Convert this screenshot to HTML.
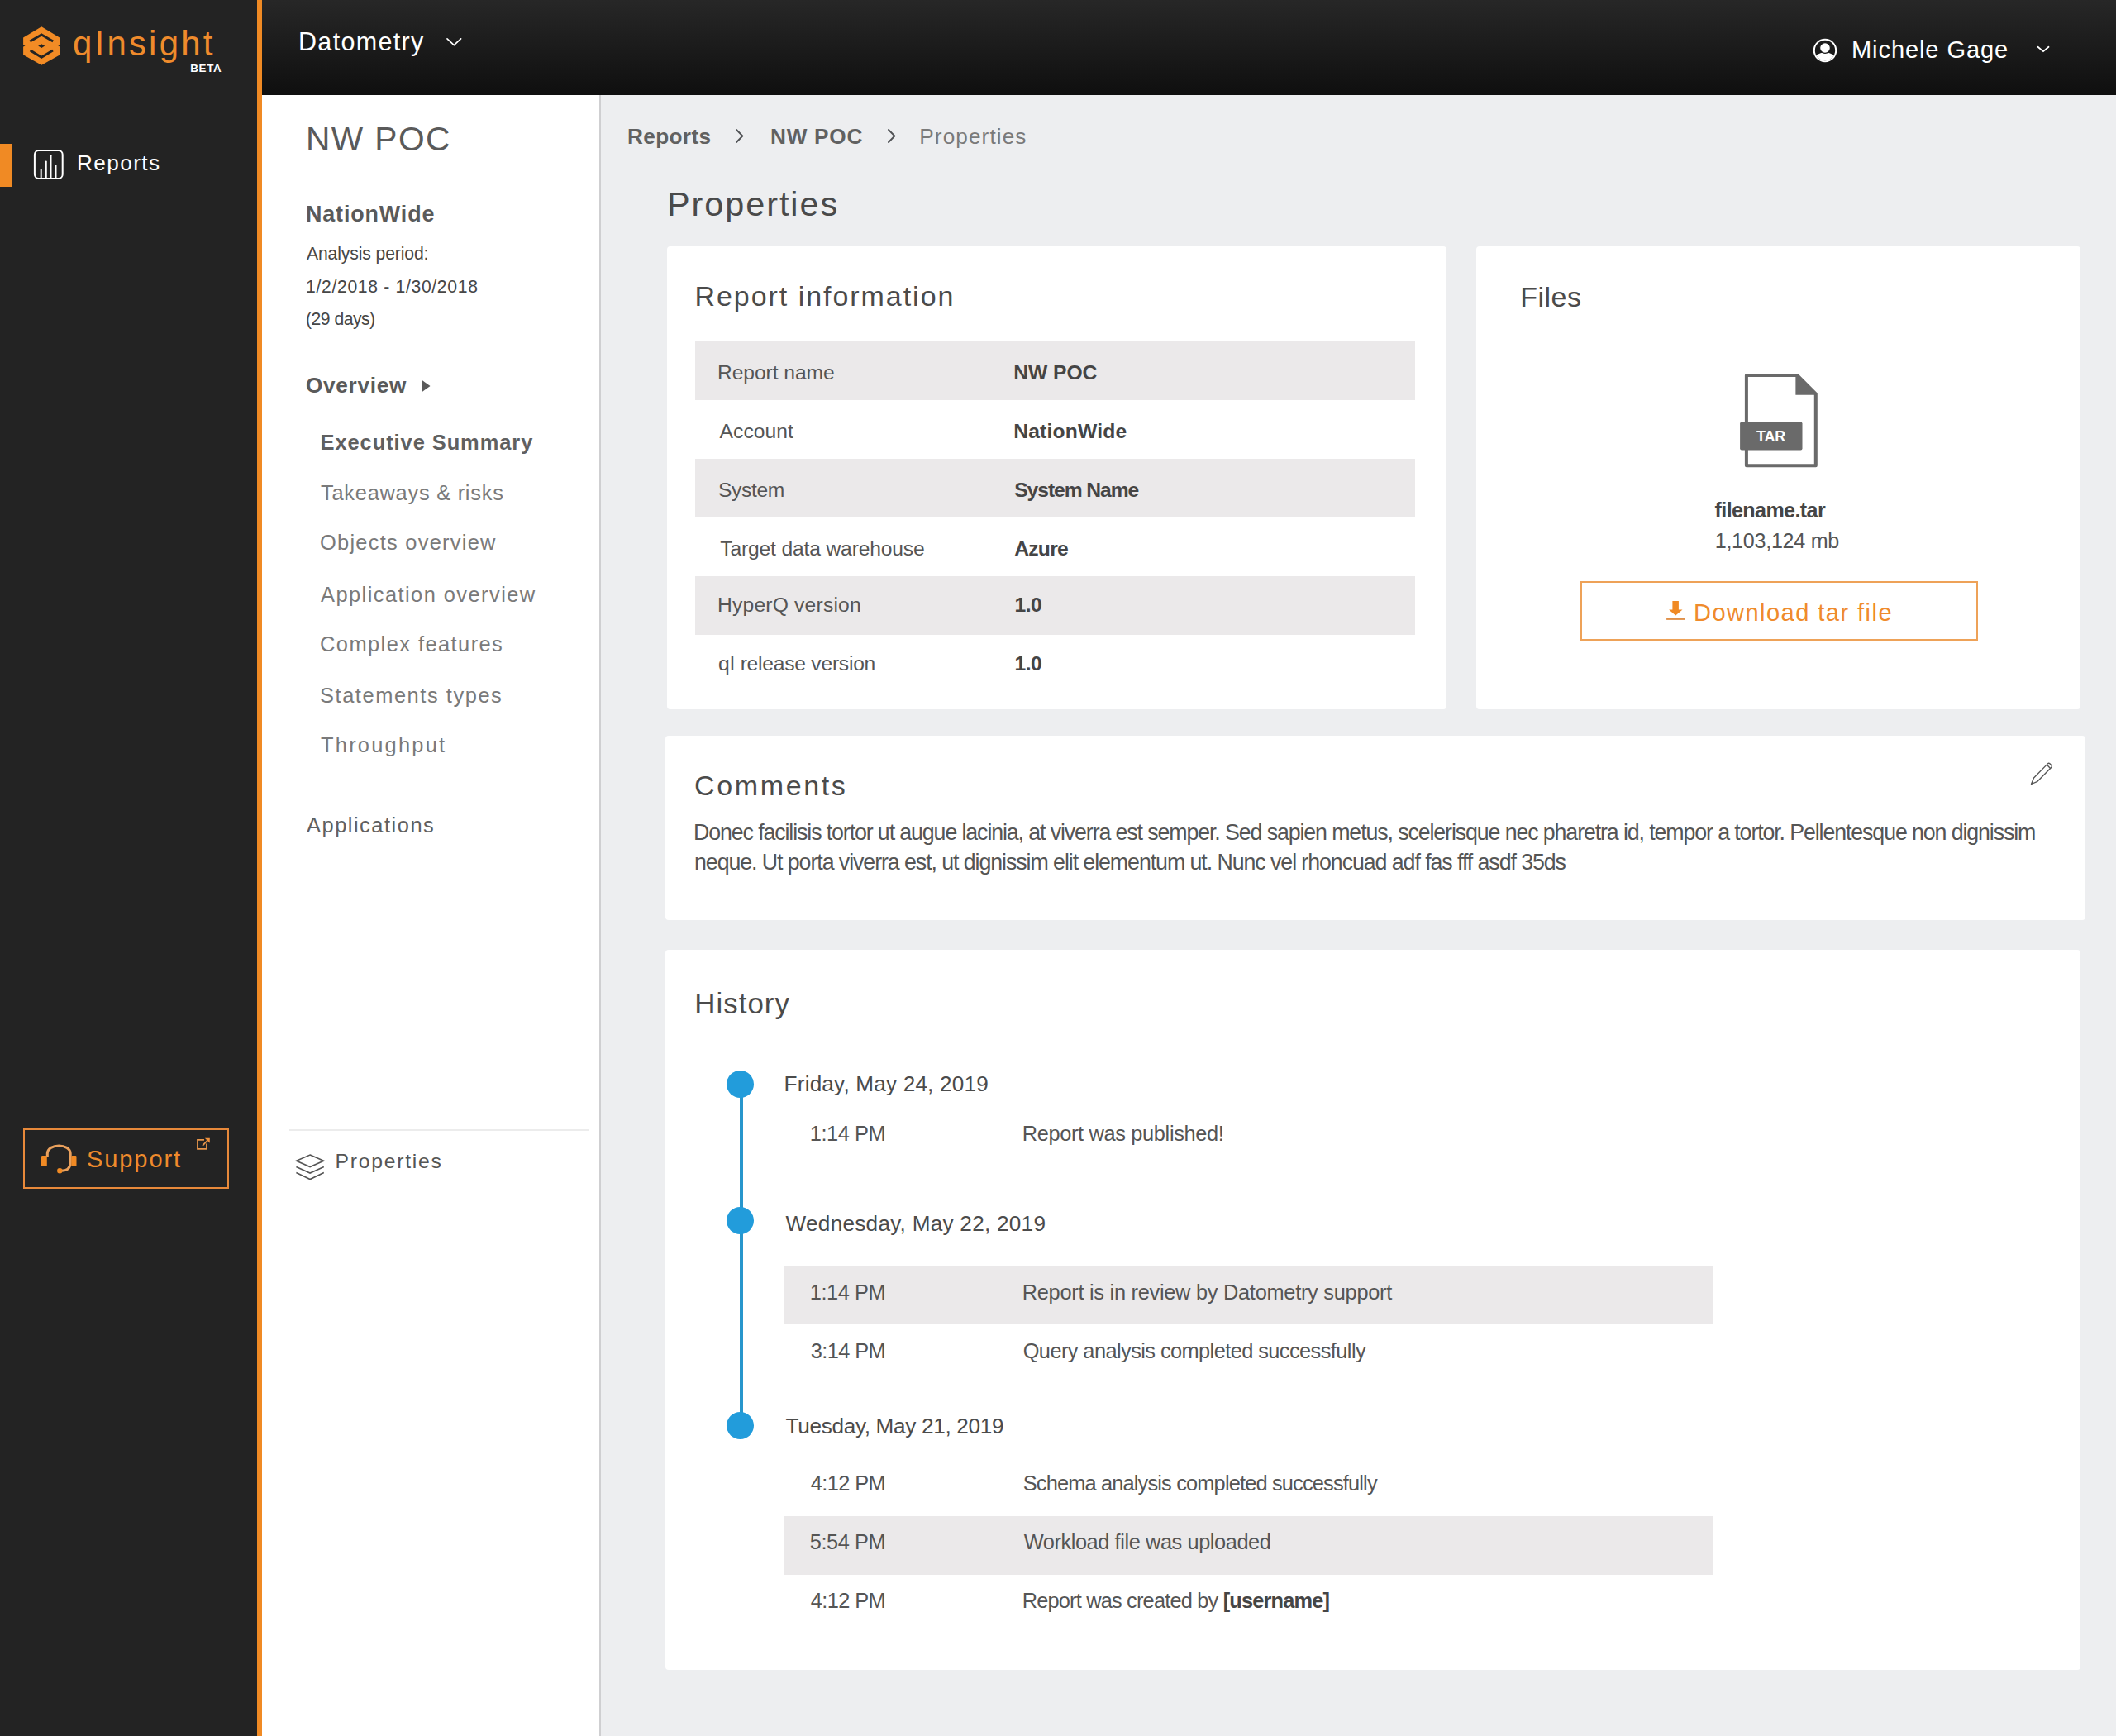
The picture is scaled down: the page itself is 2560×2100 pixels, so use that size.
<!DOCTYPE html>
<html><head><meta charset="utf-8"><title>qInsight - Properties</title>
<style>
html,body{margin:0;padding:0;width:2560px;height:2100px;overflow:hidden;background:#edeef0;font-family:"Liberation Sans",sans-serif;}
.a{position:absolute;}
.t{position:absolute;white-space:pre;line-height:1;font-family:"Liberation Sans",sans-serif;}
.t b{font-weight:700;color:#454545}
</style></head><body>
<!-- sidebar -->
<div class="a" style="left:0;top:0;width:311px;height:2100px;background:#232323"></div>
<div class="a" style="left:311px;top:0;width:6px;height:2100px;background:#f08a24"></div>
<!-- header -->
<div class="a" style="left:317px;top:0;width:2243px;height:115px;background:linear-gradient(#272727,#0f0f0f)"></div>
<!-- column 2 -->
<div class="a" style="left:317px;top:115px;width:408px;height:1985px;background:#ffffff"></div>
<div class="a" style="left:725px;top:115px;width:2px;height:1985px;background:#cfcfd1"></div>
<!-- active indicator -->
<div class="a" style="left:0;top:174px;width:14px;height:52px;background:#f08a24"></div>
<!-- cards -->
<div class="a" style="left:807px;top:298px;width:943px;height:560px;background:#fff;border-radius:4px"></div>
<div class="a" style="left:1786px;top:298px;width:731px;height:560px;background:#fff;border-radius:4px"></div>
<div class="a" style="left:805px;top:890px;width:1718px;height:223px;background:#fff;border-radius:4px"></div>
<div class="a" style="left:805px;top:1149px;width:1712px;height:871px;background:#fff;border-radius:4px"></div>
<!-- table stripes -->
<div class="a" style="left:841px;top:413px;width:871px;height:71px;background:#ebe9ea"></div>
<div class="a" style="left:841px;top:555px;width:871px;height:71px;background:#ebe9ea"></div>
<div class="a" style="left:841px;top:697px;width:871px;height:71px;background:#ebe9ea"></div>
<!-- history stripes -->
<div class="a" style="left:949px;top:1531px;width:1124px;height:71px;background:#ebe9ea"></div>
<div class="a" style="left:949px;top:1834px;width:1124px;height:71px;background:#ebe9ea"></div>
<!-- timeline -->
<div class="a" style="left:895px;top:1311px;width:4px;height:414px;background:#2896cc"></div>
<div class="a" style="left:878.5px;top:1294.5px;width:33px;height:33px;border-radius:50%;background:#229cdb"></div>
<div class="a" style="left:878.5px;top:1460px;width:33px;height:33px;border-radius:50%;background:#229cdb"></div>
<div class="a" style="left:878.5px;top:1708px;width:33px;height:33px;border-radius:50%;background:#229cdb"></div>
<!-- support box -->
<div class="a" style="left:28px;top:1365px;width:245px;height:69px;border:2px solid #e8893a"></div>
<!-- sep -->
<div class="a" style="left:350px;top:1366px;width:362px;height:2px;background:#ececec"></div>
<!-- download button -->
<div class="a" style="left:1912px;top:703px;width:477px;height:68px;border:2px solid #eea258"></div>
<svg class="a" style="left:0;top:0" width="2560" height="2100" viewBox="0 0 2560 2100">
<defs><clipPath id="uc"><circle cx="2208" cy="61" r="12.3"/></clipPath></defs>
<!-- logo -->
<polygon points="50.2,32.2 72.6,45.8 72.6,66.2 50.2,78.7 28.1,66.2 28.1,45.6" fill="#f28b25"/>
<polyline points="36.3,50 50.2,42 64.2,50" fill="none" stroke="#232323" stroke-width="3"/>
<polyline points="36.6,61 50.2,69.2 63.9,61" fill="none" stroke="#232323" stroke-width="3"/>
<polygon points="46.2,55.6 50.2,53.2 54.2,55.6 50.2,58" fill="#232323"/>
<polygon points="27,54.2 30.5,55.6 27,57" fill="#232323"/>
<polygon points="73.7,54.2 70.2,55.6 73.7,57" fill="#232323"/>
<!-- header chevrons -->
<polyline points="541,46.8 549.3,54.5 557.6,46.8" fill="none" stroke="#fff" stroke-width="1.7" stroke-linecap="round"/>
<polyline points="2465.5,56.8 2472,62.2 2478.5,56.8" fill="none" stroke="#fff" stroke-width="1.8" stroke-linecap="round"/>
<!-- user icon -->
<circle cx="2208" cy="61" r="13.2" fill="none" stroke="#fff" stroke-width="2"/>
<ellipse cx="2208" cy="75.5" rx="14" ry="12.3" fill="#fff" clip-path="url(#uc)"/>
<circle cx="2208" cy="58" r="6.4" fill="#fff" stroke="#181818" stroke-width="1.2"/>
<!-- reports icon -->
<rect x="41.9" y="182.1" width="33.8" height="34" rx="5" fill="none" stroke="#fff" stroke-width="2"/>
<g stroke="#fff" stroke-width="2" stroke-linecap="round">
<line x1="49.7" y1="205" x2="49.7" y2="215.5"/>
<line x1="55.75" y1="195.4" x2="55.75" y2="215.5"/>
<line x1="61.5" y1="188.2" x2="61.5" y2="215.5"/>
<line x1="67.5" y1="200.5" x2="67.5" y2="215.5"/>
</g>
<!-- overview triangle -->
<polygon points="510,459.5 520.5,467 510,474.5" fill="#5a5a5a"/>
<!-- breadcrumb chevrons -->
<polyline points="891,157 898.4,164.5 891,172" fill="none" stroke="#505255" stroke-width="1.9" stroke-linecap="round"/>
<polyline points="1075,157 1082.4,164.5 1075,172" fill="none" stroke="#505255" stroke-width="1.9" stroke-linecap="round"/>
<!-- headset -->
<path d="M57.3 1399.5 V1395.5 C57.3 1382.8, 85.2 1382.8, 85.2 1395.5 V1406 Q85.2 1416.2 74 1416.2" fill="none" stroke="#e9a05c" stroke-width="3"/>
<g fill="#f08a24">
<rect x="50" y="1398" width="6.8" height="12.8" rx="1.2"/>
<rect x="86.3" y="1398" width="6.2" height="12.8" rx="1.2"/>
<circle cx="72.3" cy="1416.2" r="3.2"/>
</g>
<!-- ext link -->
<path d="M247 1378.9 H238.9 V1389.9 H249.9 V1383.5" fill="none" stroke="#e8964a" stroke-width="1.6"/>
<line x1="245" y1="1385.8" x2="251.5" y2="1379" stroke="#e8964a" stroke-width="1.8"/>
<polygon points="247.8,1376.7 253.8,1376.7 253.8,1382.7" fill="#ef8f3a"/>
<!-- layers -->
<g fill="none" stroke="#555" stroke-width="1.6" stroke-linejoin="miter">
<polygon points="375.1,1397.1 391.7,1404.2 375.1,1411.6 358.5,1404.2"/>
<polyline points="358.4,1411.6 375.1,1419 391.8,1411.6"/>
<polyline points="358.4,1418.5 375.1,1426.5 391.8,1418.5"/>
</g>
<!-- file icon -->
<path d="M2112.9 454 H2174.3 L2196.8 476.5 V563.2 H2112.9 Z" fill="none" stroke="#6a6a6a" stroke-width="4" stroke-linejoin="round"/>
<polygon points="2172.4,453 2197.5,477.7 2172.4,477.7" fill="#6a6a6a"/>
<rect x="2105.1" y="510.4" width="75.4" height="34.2" rx="2" fill="#6a6a6a"/>
<!-- download icon -->
<path d="M2023.4 727.1 H2030.9 V737.5 H2035.5 L2027.2 744.4 L2019.1 737.5 H2023.4 Z" fill="#f08a24"/>
<rect x="2016.1" y="747.4" width="22.7" height="2.5" fill="#e0914a"/>
<!-- pencil -->
<g transform="translate(2457.5 948.5) rotate(-45.5)" fill="none" stroke="#555" stroke-width="1.35" stroke-linejoin="round">
<path d="M0 0 L7.5 -3.1 H31.5 Q33.3 -3.1 33.3 -1.3 V1.3 Q33.3 3.1 31.5 3.1 H7.5 Z"/>
<line x1="29.8" y1="-3.1" x2="29.8" y2="3.1"/>
<line x1="1.6" y1="-0.7" x2="1.6" y2="0.7" stroke-width="2"/>
</g>
</svg>

<div class="t" style="left:88.0px;top:32px;font-size:41.86px;font-weight:400;color:#ef8b2c;letter-spacing:3.246px">qInsight</div>
<div class="t" style="left:230.3px;top:76px;font-size:13.37px;font-weight:700;color:#ffffff;letter-spacing:0.658px">BETA</div>
<div class="t" style="left:361.0px;top:35px;font-size:30.52px;font-weight:400;color:#ffffff;letter-spacing:1.314px">Datometry</div>
<div class="t" style="left:2240.0px;top:46px;font-size:29.07px;font-weight:400;color:#ffffff;letter-spacing:0.895px">Michele Gage</div>
<div class="t" style="left:93.0px;top:184px;font-size:26.16px;font-weight:400;color:#ffffff;letter-spacing:1.415px">Reports</div>
<div class="t" style="left:105.0px;top:1388px;font-size:29.07px;font-weight:400;color:#ef8b2c;letter-spacing:1.881px">Support</div>
<div class="t" style="left:370.0px;top:148px;font-size:40.70px;font-weight:400;color:#5a5a5a;letter-spacing:1.425px">NW POC</div>
<div class="t" style="left:370.0px;top:246px;font-size:26.89px;font-weight:700;color:#5a5a5a;letter-spacing:0.876px">NationWide</div>
<div class="t" style="left:371.0px;top:296px;font-size:21.15px;font-weight:400;color:#474747;letter-spacing:-0.117px">Analysis period:</div>
<div class="t" style="left:370.0px;top:336px;font-size:21.15px;font-weight:400;color:#474747;letter-spacing:0.672px">1/2/2018 - 1/30/2018</div>
<div class="t" style="left:370.0px;top:375px;font-size:21.15px;font-weight:400;color:#474747;letter-spacing:-0.503px">(29 days)</div>
<div class="t" style="left:370.0px;top:453px;font-size:26.16px;font-weight:700;color:#5a5a5a;letter-spacing:0.717px">Overview</div>
<div class="t" style="left:387.5px;top:523px;font-size:25.44px;font-weight:700;color:#606060;letter-spacing:0.938px">Executive Summary</div>
<div class="t" style="left:388.0px;top:584px;font-size:25.44px;font-weight:400;color:#7a7a7a;letter-spacing:0.727px">Takeaways &amp; risks</div>
<div class="t" style="left:387.0px;top:644px;font-size:25.44px;font-weight:400;color:#7a7a7a;letter-spacing:1.253px">Objects overview</div>
<div class="t" style="left:388.0px;top:707px;font-size:25.44px;font-weight:400;color:#7a7a7a;letter-spacing:1.438px">Application overview</div>
<div class="t" style="left:387.0px;top:767px;font-size:25.44px;font-weight:400;color:#7a7a7a;letter-spacing:1.432px">Complex features</div>
<div class="t" style="left:387.0px;top:829px;font-size:25.44px;font-weight:400;color:#7a7a7a;letter-spacing:1.553px">Statements types</div>
<div class="t" style="left:388.0px;top:889px;font-size:25.44px;font-weight:400;color:#7a7a7a;letter-spacing:2.226px">Throughput</div>
<div class="t" style="left:371.0px;top:986px;font-size:25.44px;font-weight:400;color:#606060;letter-spacing:1.512px">Applications</div>
<div class="t" style="left:405.6px;top:1393px;font-size:24.71px;font-weight:400;color:#555555;letter-spacing:1.736px">Properties</div>
<div class="t" style="left:759.0px;top:152px;font-size:26.16px;font-weight:700;color:#616161;letter-spacing:0.370px">Reports</div>
<div class="t" style="left:932.0px;top:152px;font-size:26.16px;font-weight:700;color:#616161;letter-spacing:0.753px">NW POC</div>
<div class="t" style="left:1112.3px;top:152px;font-size:26.16px;font-weight:400;color:#7a7a7a;letter-spacing:1.096px">Properties</div>
<div class="t" style="left:807.0px;top:226px;font-size:41.43px;font-weight:400;color:#4a4a4a;letter-spacing:1.932px">Properties</div>
<div class="t" style="left:840.5px;top:341px;font-size:34.01px;font-weight:400;color:#4b4b4b;letter-spacing:1.954px">Report information</div>
<div class="t" style="left:868.0px;top:439px;font-size:24.67px;font-weight:400;color:#555555;letter-spacing:-0.082px">Report name</div>
<div class="t" style="left:870.6px;top:510px;font-size:24.67px;font-weight:400;color:#555555;letter-spacing:0.027px">Account</div>
<div class="t" style="left:869.0px;top:581px;font-size:24.67px;font-weight:400;color:#555555;letter-spacing:-0.373px">System</div>
<div class="t" style="left:871.3px;top:652px;font-size:24.67px;font-weight:400;color:#555555;letter-spacing:-0.171px">Target data warehouse</div>
<div class="t" style="left:868.0px;top:720px;font-size:24.67px;font-weight:400;color:#555555;letter-spacing:0.187px">HyperQ version</div>
<div class="t" style="left:869.0px;top:791px;font-size:24.67px;font-weight:400;color:#555555;letter-spacing:-0.253px">qI release version</div>
<div class="t" style="left:1226.2px;top:439px;font-size:24.67px;font-weight:700;color:#454545;letter-spacing:-0.030px">NW POC</div>
<div class="t" style="left:1226.2px;top:510px;font-size:24.67px;font-weight:700;color:#454545;letter-spacing:0.181px">NationWide</div>
<div class="t" style="left:1227.2px;top:581px;font-size:24.67px;font-weight:700;color:#454545;letter-spacing:-1.061px">System Name</div>
<div class="t" style="left:1227.2px;top:652px;font-size:24.67px;font-weight:700;color:#454545;letter-spacing:-0.748px">Azure</div>
<div class="t" style="left:1227.6px;top:720px;font-size:24.67px;font-weight:700;color:#454545;letter-spacing:-0.581px">1.0</div>
<div class="t" style="left:1227.6px;top:791px;font-size:24.67px;font-weight:700;color:#454545;letter-spacing:-0.581px">1.0</div>
<div class="t" style="left:1839.3px;top:342px;font-size:34.01px;font-weight:400;color:#4b4b4b;letter-spacing:0.479px">Files</div>
<div class="t" style="left:2125.0px;top:519px;font-size:18.02px;font-weight:700;color:#ffffff;letter-spacing:-0.189px">TAR</div>
<div class="t" style="left:2074.6px;top:605px;font-size:25.10px;font-weight:700;color:#454545;letter-spacing:-0.619px">filename.tar</div>
<div class="t" style="left:2074.7px;top:642px;font-size:25.10px;font-weight:400;color:#555555;letter-spacing:-0.257px">1,103,124 mb</div>
<div class="t" style="left:2049.0px;top:727px;font-size:29.07px;font-weight:400;color:#ef8b2c;letter-spacing:1.444px">Download tar file</div>
<div class="t" style="left:840.0px;top:933px;font-size:34.01px;font-weight:400;color:#4b4b4b;letter-spacing:2.633px">Comments</div>
<div class="t" style="left:839.0px;top:994px;font-size:26.79px;font-weight:400;color:#555555;letter-spacing:-1.117px">Donec facilisis tortor ut augue lacinia, at viverra est semper. Sed sapien metus, scelerisque nec pharetra id, tempor a tortor. Pellentesque non dignissim</div>
<div class="t" style="left:840.0px;top:1030px;font-size:26.79px;font-weight:400;color:#555555;letter-spacing:-1.077px">neque. Ut porta viverra est, ut dignissim elit elementum ut. Nunc vel rhoncuad adf fas fff asdf 35ds</div>
<div class="t" style="left:840.3px;top:1197px;font-size:34.88px;font-weight:400;color:#4b4b4b;letter-spacing:1.005px">History</div>
<div class="t" style="left:948.6px;top:1298px;font-size:26.16px;font-weight:400;color:#4b4b4b;letter-spacing:0.178px">Friday, May 24, 2019</div>
<div class="t" style="left:979.8px;top:1359px;font-size:25.38px;font-weight:400;color:#555555;letter-spacing:-0.453px">1:14 PM</div>
<div class="t" style="left:1236.7px;top:1359px;font-size:25.38px;font-weight:400;color:#555555;letter-spacing:-0.344px">Report was published!</div>
<div class="t" style="left:950.6px;top:1467px;font-size:26.16px;font-weight:400;color:#4b4b4b;letter-spacing:0.255px">Wednesday, May 22, 2019</div>
<div class="t" style="left:979.8px;top:1551px;font-size:25.38px;font-weight:400;color:#555555;letter-spacing:-0.453px">1:14 PM</div>
<div class="t" style="left:1236.7px;top:1551px;font-size:25.38px;font-weight:400;color:#555555;letter-spacing:-0.275px">Report is in review by Datometry support</div>
<div class="t" style="left:980.8px;top:1622px;font-size:25.38px;font-weight:400;color:#555555;letter-spacing:-0.619px">3:14 PM</div>
<div class="t" style="left:1237.7px;top:1622px;font-size:25.38px;font-weight:400;color:#555555;letter-spacing:-0.579px">Query analysis completed successfully</div>
<div class="t" style="left:950.6px;top:1712px;font-size:26.16px;font-weight:400;color:#4b4b4b;letter-spacing:-0.325px">Tuesday, May 21, 2019</div>
<div class="t" style="left:980.8px;top:1782px;font-size:25.38px;font-weight:400;color:#555555;letter-spacing:-0.619px">4:12 PM</div>
<div class="t" style="left:1237.7px;top:1782px;font-size:25.38px;font-weight:400;color:#555555;letter-spacing:-0.835px">Schema analysis completed successfully</div>
<div class="t" style="left:979.8px;top:1853px;font-size:25.38px;font-weight:400;color:#555555;letter-spacing:-0.453px">5:54 PM</div>
<div class="t" style="left:1238.7px;top:1853px;font-size:25.38px;font-weight:400;color:#555555;letter-spacing:-0.426px">Workload file was uploaded</div>
<div class="t" style="left:980.8px;top:1924px;font-size:25.38px;font-weight:400;color:#555555;letter-spacing:-0.619px">4:12 PM</div>
<div class="t" style="left:1236.7px;top:1924px;font-size:25.38px;font-weight:400;color:#555555;letter-spacing:-0.817px">Report was created by <b>[username]</b></div>
</body></html>
